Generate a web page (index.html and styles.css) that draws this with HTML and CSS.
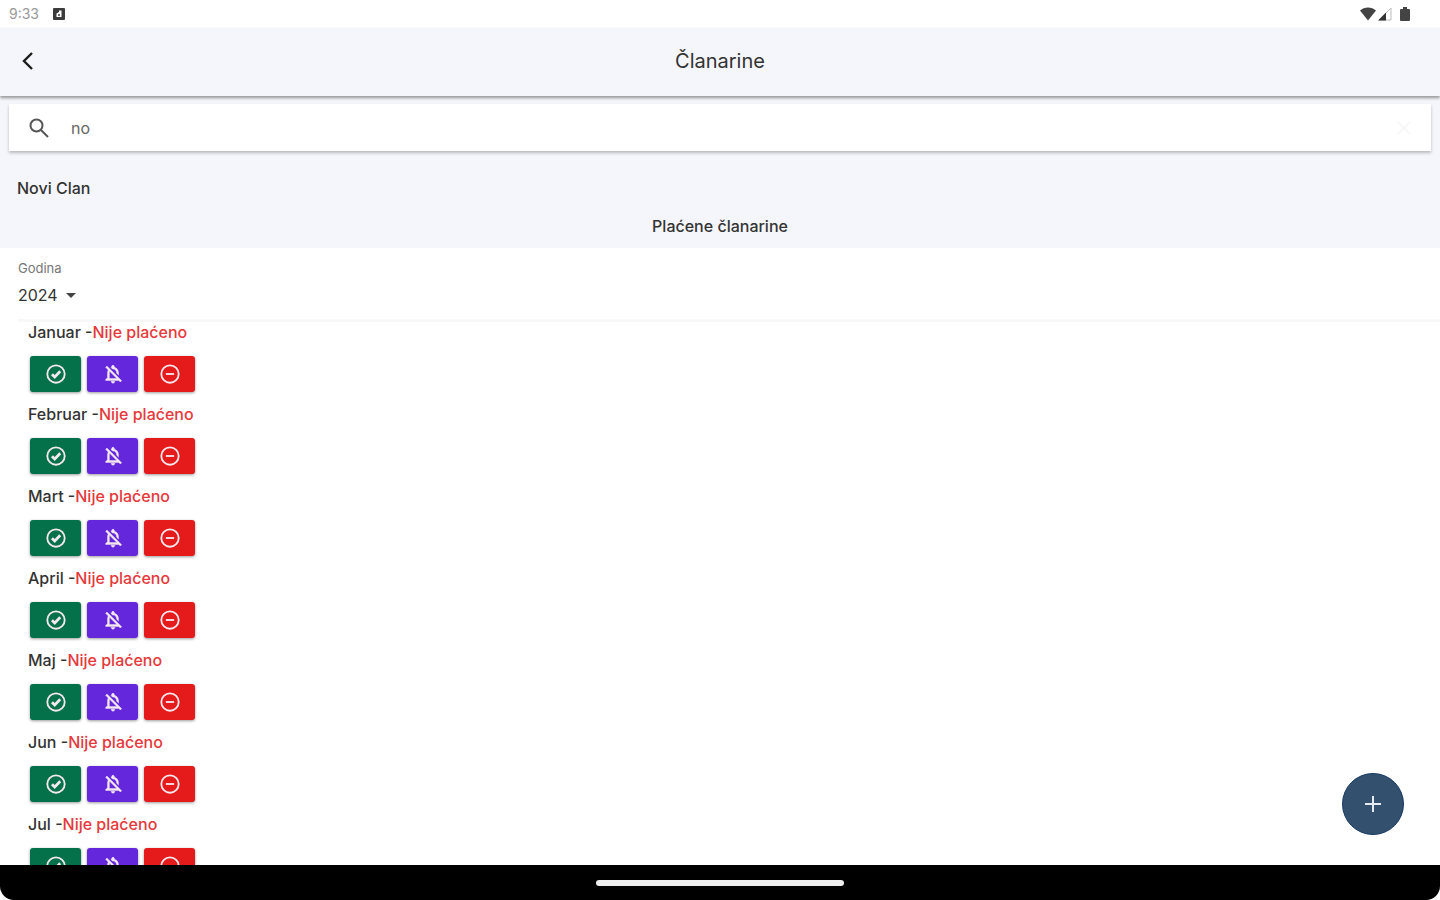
FILE: index.html
```
<!DOCTYPE html>
<html lang="hr">
<head>
    <meta charset="UTF-8">
    <meta name="viewport" content="width=device-width, initial-scale=1.0">
    <title>Članarine</title>
    <link rel="stylesheet" href="styles.css">
</head>
<body>
    <!-- shared icons -->
    <svg class="sprite" aria-hidden="true">
        <symbol id="icon-paid" viewBox="0 0 24 24">
            <circle cx="12" cy="12" r="9.500" fill="none" stroke="currentColor" stroke-width="2"/>
            <path d="M7.600 12.200l3 3 6-6.200" fill="none" stroke="currentColor" stroke-width="3"/>
        </symbol>
        <symbol id="icon-mute" viewBox="0 0 24 24">
            <path d="M12 22c1.100 0 2-.9 2-2h-4c0 1.100.9 2 2 2zm0-15.500c2.490 0 4 2.020 4 4.500v.1l2 2V11c0-3.070-1.630-5.640-4.500-6.320V4c0-.83-.67-1.500-1.500-1.500s-1.500.67-1.500 1.500v.68c-.24.06-.47.15-.69.23l1.640 1.640c.18-.02.36-.05.55-.05zM5.410 3.350L4 4.760l2.810 2.810C6.290 8.570 6 9.740 6 11v5l-2 2v1h14.240l1.740 1.740 1.410-1.410L5.410 3.350zM16 17H8v-6c0-.68.12-1.320.34-1.900L16 16.760V17z" fill="currentColor" stroke="currentColor" stroke-width=".5"/>
        </symbol>
        <symbol id="icon-unpaid" viewBox="0 0 24 24">
            <circle cx="12" cy="12" r="9.500" fill="none" stroke="currentColor" stroke-width="2"/>
            <path d="M7.500 12h9" fill="none" stroke="currentColor" stroke-width="2"/>
        </symbol>
    </svg>

    <div class="status-bar">
        <span class="clock">9:33</span>
        <svg width="12" height="12" viewBox="0 0 12 12">
            <rect width="12" height="12" rx="1" fill="#3c3c3c"/>
            <path d="M3.500 9V5.500L6 4V2.500h2.500V9z" fill="#fff"/>
            <circle cx="6" cy="7" r="1" fill="#3c3c3c"/>
        </svg>
        <div class="status-icons">
            <svg width="16" height="14" viewBox="0 0 16 14"><path d="M0 3.500C4.500-.4 11.500-.4 16 3.500L8 13.500z" fill="#444"/></svg>
            <svg width="14" height="14" viewBox="0 0 14 14">
                <path d="M1 13L13 1v12z" fill="#fff" stroke="#bbb"/>
                <path d="M0 13.500L8 5.500v8z" fill="#333"/>
            </svg>
            <svg width="10" height="14" viewBox="0 0 10 14"><path d="M3 0h4v2h2q1 0 1 1v10q0 1-1 1H1q-1 0-1-1V3q0-1 1-1h2z" fill="#444"/></svg>
        </div>
    </div>

    <header class="app-bar">
        <button class="icon-btn" aria-label="Natrag">
            <svg width="20" height="20" viewBox="0 0 20 20"><path d="M14 2L6 10l8 8" fill="none" stroke="#1c1c1c" stroke-width="2.400"/></svg>
        </button>
        <h1>Članarine</h1>
    </header>

    <section class="member">
        <div class="search-box">
            <label for="search" aria-label="Pretraga">
                <svg width="20" height="20" viewBox="0 0 20 20" fill="none" stroke="#555" stroke-width="2">
                    <circle cx="7.500" cy="7.500" r="6"/>
                    <path d="M12 12l7 7"/>
                </svg>
            </label>
            <input type="text" id="search" value="no">
            <button class="icon-btn" aria-label="Obriši">
                <svg width="14" height="14" viewBox="0 0 14 14"><path d="M1 1l12 12M13 1L1 13" stroke="#f8f8f8" stroke-width="2"/></svg>
            </button>
        </div>
        <p class="member-name">Novi Clan</p>
        <h2>Plaćene članarine</h2>
    </section>

    <div class="year">
        <label for="year">Godina</label>
        <div class="year-select">
            <select id="year">
                <option>2024</option>
            </select>
            <svg width="10" height="5" viewBox="0 0 10 5"><path d="M0 0h10L5 5z" fill="#444"/></svg>
        </div>
    </div>

    <main class="month-list" id="month-list"></main>

    <button class="fab" aria-label="Dodaj">
        <svg width="18" height="18" viewBox="0 0 18 18"><path d="M9 1v16M1 9h16" stroke="#e6ebf0" stroke-width="2"/></svg>
    </button>

    <footer class="nav-bar"><div class="nav-handle"></div></footer>

    <script>
        const months = ['Januar', 'Februar', 'Mart', 'April', 'Maj', 'Jun', 'Jul'];
        const actions = [
            ['paid', 'Plaćeno'],
            ['mute', 'Isključi obavijest'],
            ['unpaid', 'Nije plaćeno']
        ];
        const list = document.getElementById('month-list');

        months.forEach(month => {
            const row = document.createElement('div');
            row.className = 'month';
            const buttons = actions.map(([name, label]) =>
                `<button class="action ${name}" aria-label="${label}"><svg width="22" height="22"><use href="#icon-${name}"/></svg></button>`
            ).join('');
            row.innerHTML = `<p class="month-name">${month} -<span class="unpaid-text">Nije plaćeno</span></p><div class="actions">${buttons}</div>`;
            list.appendChild(row);
        });
    </script>
</body>
</html>
```
FILE: styles.css
```
* {
    box-sizing: border-box;
}

body {
    display: flex;
    flex-direction: column;
    height: 100vh;
    margin: 0;
    overflow: hidden;
    background-color: #fff;
    color: #333;
    font-family: Inter, Roboto, sans-serif;
    font-size: 16px;
    line-height: 20px;
}

h1, h2, p {
    margin: 0;
    font-weight: 400;
}

button, input, select {
    padding: 0;
    border: none;
    background: none;
    color: inherit;
    font: inherit;
}

button {
    display: flex;
    align-items: center;
    justify-content: center;
    cursor: pointer;
}

.sprite {
    display: none;
}

.status-bar {
    display: flex;
    align-items: center;
    flex-shrink: 0;
    gap: 14px;
    height: 28px;
    padding: 0 30px 0 9px;
}

.clock {
    color: #999;
    font-size: 14px;
}

.status-icons {
    display: flex;
    gap: 2px;
    margin-left: auto;
}

.status-icons svg:last-child {
    margin-left: 6px;
}

.app-bar {
    display: grid;
    grid-template-columns: 24px 1fr 24px;
    align-items: center;
    flex-shrink: 0;
    height: 68px;
    padding: 0 16px 2px;
    background-color: #f5f6fb;
    box-shadow: 0 2px 3px rgba(0, 0, 0, 0.4);
    z-index: 1;
}

.app-bar h1 {
    font-size: 20px;
    line-height: 28px;
    text-align: center;
}

.member {
    flex-shrink: 0;
    padding: 8px 9px 12px;
    background-color: #f5f6fb;
}

.search-box {
    display: flex;
    align-items: center;
    height: 47px;
    padding: 0 20px;
    background-color: #fff;
    box-shadow: 0 2px 3px rgba(0, 0, 0, 0.25);
}

.search-box label {
    display: flex;
}

.search-box input {
    flex: 1;
    min-width: 0;
    margin-left: 22px;
    color: #666;
    outline: none;
}

.member-name {
    margin: 27px 8px 18px;
    font-weight: 500;
}

.member h2 {
    font-size: 16px;
    font-weight: 500;
    text-align: center;
}

.year {
    flex-shrink: 0;
    padding: 12px 0 14px;
    margin-left: 18px;
    border-bottom: 3px solid #f8f8f8;
}

.year label {
    display: block;
    margin-bottom: 9px;
    color: #777;
    font-size: 13px;
    line-height: 16px;
}

.year-select {
    display: flex;
    align-items: center;
    gap: 8px;
}

.year-select select {
    appearance: none;
    height: 20px;
}

.month-list {
    flex: 1;
    min-height: 0;
    overflow: hidden;
    padding-left: 28px;
}

.month {
    margin-bottom: 12px;
}

.month-name {
    font-weight: 500;
}

.unpaid-text {
    color: #e5393c;
}

.actions {
    display: flex;
    gap: 6px;
    margin-top: 14px;
    padding-left: 2px;
}

.action {
    width: 51px;
    height: 36px;
    border-radius: 3px;
    box-shadow: 0 1px 3px rgba(0, 0, 0, 0.4);
    color: #f5e9f0;
}

.paid {
    background-color: #04714a;
}

.mute {
    background-color: #6527db;
}

.unpaid {
    background-color: #e51a1a;
}

.fab {
    position: absolute;
    right: 36px;
    bottom: 65px;
    width: 62px;
    height: 62px;
    border: 1px solid #173963;
    border-radius: 50%;
    background-color: #34506f;
}

.nav-bar {
    display: flex;
    align-items: center;
    justify-content: center;
    flex-shrink: 0;
    height: 35px;
    border-radius: 0 0 14px 14px;
    background-color: #000;
}

.nav-handle {
    width: 248px;
    height: 6px;
    border-radius: 3px;
    background-color: #eee;
}
```
